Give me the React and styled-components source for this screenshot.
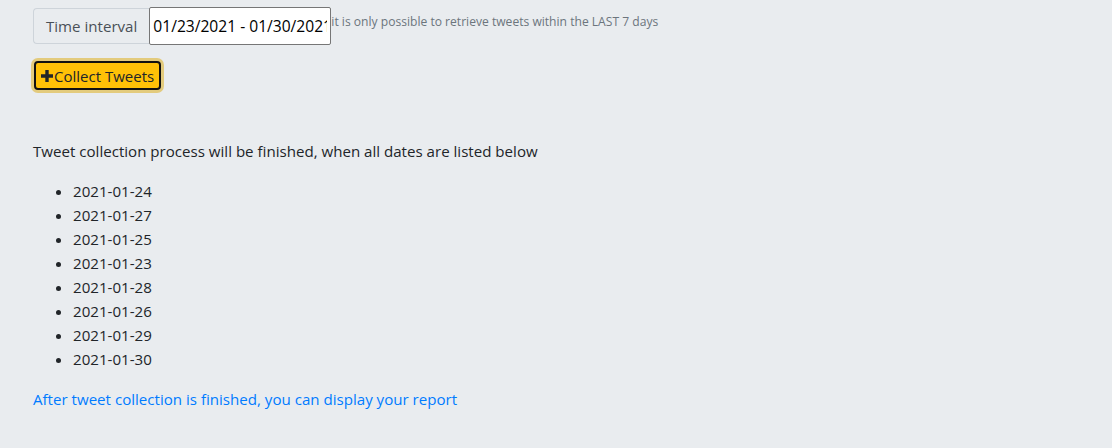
import React from "react";
import styled, { createGlobalStyle } from "styled-components";

const GlobalStyle = createGlobalStyle`
  html, body {
    margin: 0;
    padding: 0;
    background: #e9ecef;
  }
  body {
    font-family: "Open Sans", "Noto Sans", "Liberation Sans", sans-serif;
    font-size: 15.1px;
    line-height: 24px;
    color: #212529;
  }
`;

const dates = [
  "2021-01-24",
  "2021-01-27",
  "2021-01-25",
  "2021-01-23",
  "2021-01-28",
  "2021-01-26",
  "2021-01-29",
  "2021-01-30",
];

function App() {
  return (
    <Page>
      <GlobalStyle />
      <FormRow>
        <InputGroup>
          <Prepend>Time interval</Prepend>
          <DateInput type="text" defaultValue="01/23/2021 - 01/30/2021" />
        </InputGroup>
        <Hint>it is only possible to retrieve tweets within the LAST 7 days</Hint>
      </FormRow>
      <ButtonRow>
        <CollectButton>
          <svg width="12" height="12" viewBox="0 0 12 12">
            <path d="M4.3 0h3.4v4.3H12v3.4H7.7V12H4.3V7.7H0V4.3h4.3z" fill="#212529" />
          </svg>
          Collect Tweets
        </CollectButton>
      </ButtonRow>
      <Para>Tweet collection process will be finished, when all dates are listed below</Para>
      <DateList>
        {dates.map((d) => (
          <li key={d}>{d}</li>
        ))}
      </DateList>
      <ReportLink href="#">After tweet collection is finished, you can display your report</ReportLink>
    </Page>
  );
}

const Page = styled.div`
  padding: 7px 33px 0;
`;
const FormRow = styled.div`
  display: flex;
  align-items: flex-start;
`;
const InputGroup = styled.div`
  display: flex;
  align-items: stretch;
`;
const Prepend = styled.span`
  display: flex;
  align-items: center;
  box-sizing: border-box;
  height: 36px;
  margin-top: 1px;
  padding: 0 12px;
  background: #e9ecef;
  border: 1px solid #ced4da;
  border-right: none;
  border-radius: 4px 0 0 4px;
  color: #495057;
  white-space: nowrap;
`;
const DateInput = styled.input`
  box-sizing: border-box;
  width: 182px;
  height: 38px;
  padding: 1px 3px;
  border: 1px solid #767676;
  border-radius: 2px;
  background: #fff;
  font-family: inherit;
  font-size: 15.6px;
  color: #000;
  outline: none;
`;
const Hint = styled.small`
  font-size: 12.1px;
  line-height: 16px;
  margin-top: 7px;
  color: #6c757d;
  white-space: nowrap;
`;
const ButtonRow = styled.div`
  margin-top: 16px;
  padding-left: 1px;
`;
const CollectButton = styled.button`
  display: inline-flex;
  align-items: center;
  gap: 1px;
  box-sizing: border-box;
  height: 29px;
  padding: 0 5px;
  background: #ffc107;
  border: 2px solid #111;
  border-radius: 4px;
  box-shadow: 0 0 0 3px rgba(222, 170, 12, 0.5);
  color: #212529;
  font-family: inherit;
  font-size: 15px;
  cursor: pointer;
`;
const Para = styled.p`
  margin: 49px 0 16px;
`;
const DateList = styled.ul`
  margin: 0 0 16px;
  padding-left: 40px;
`;
const ReportLink = styled.a`
  color: #007bff;
  text-decoration: none;
`;

export default App;
